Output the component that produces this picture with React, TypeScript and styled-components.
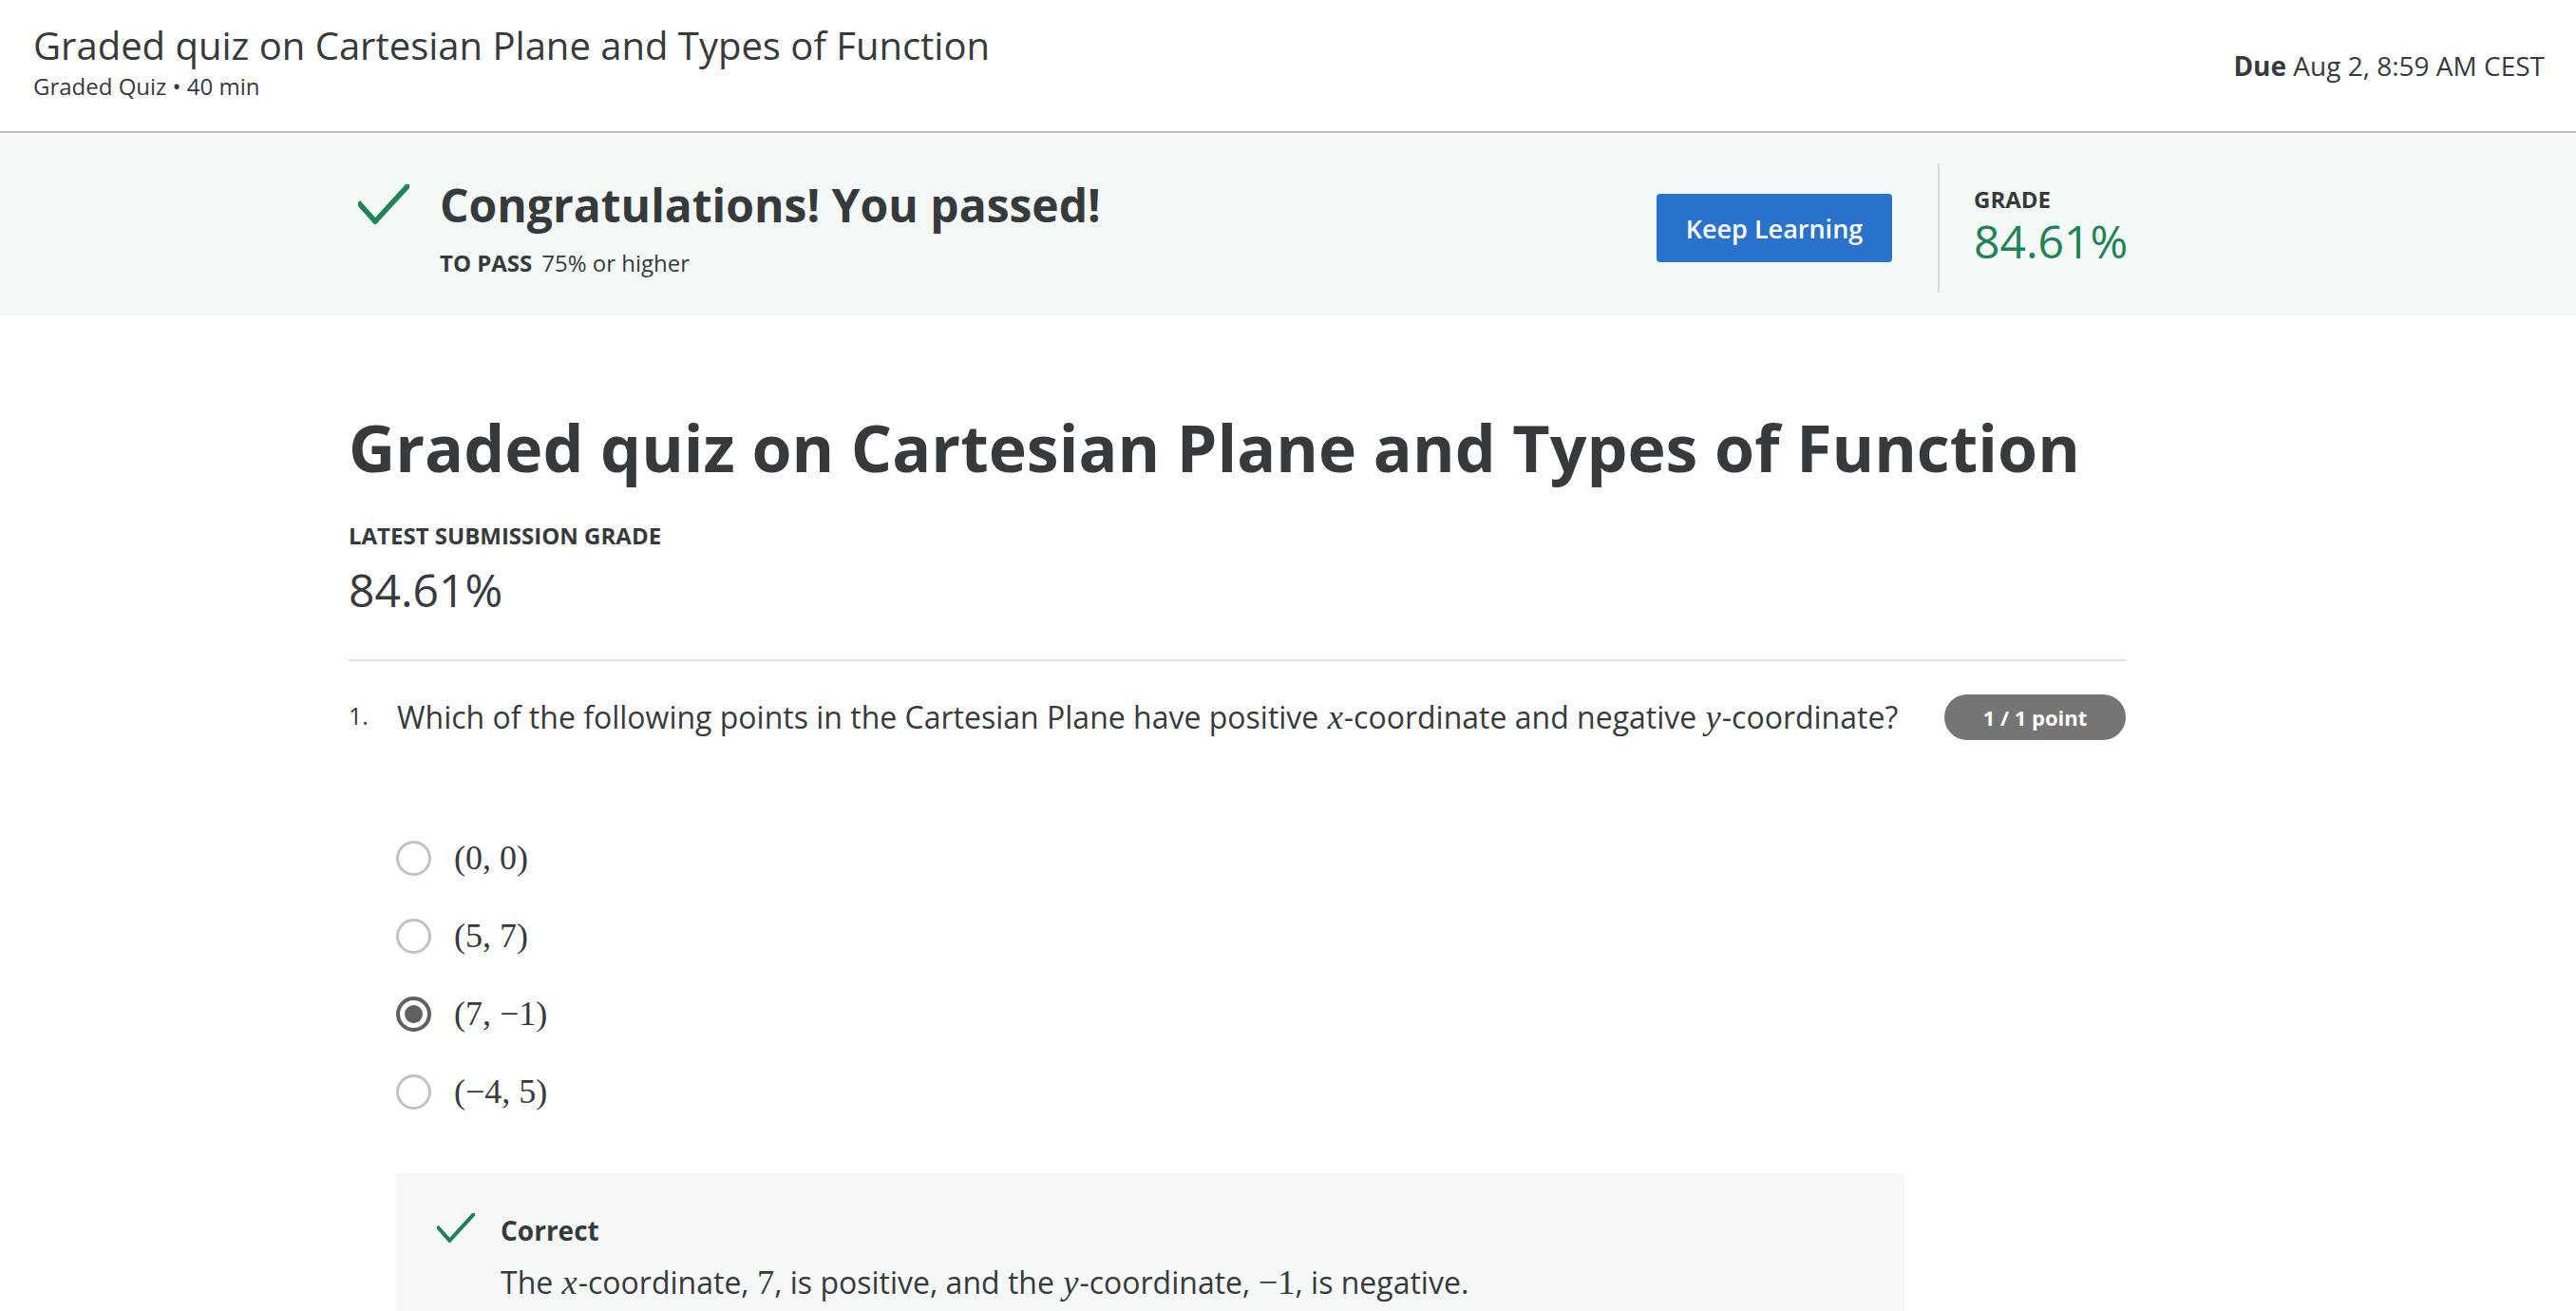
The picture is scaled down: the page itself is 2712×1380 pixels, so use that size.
import React from "react";
import styled, { createGlobalStyle } from "styled-components";

const GlobalStyle = createGlobalStyle`
  html, body {
    margin: 0;
    padding: 0;
    background: #ffffff;
  }
  body {
    font-family: "Open Sans", "Noto Sans", sans-serif;
    color: #373a3c;
  }
`;

const Page = styled.div`
  width: 2712px;
  min-height: 1380px;
  overflow: hidden;
`;

// top header
const Header = styled.header`
  height: 140px;
  box-sizing: border-box;
  padding: 24px 33px 0 35px;
  border-bottom: 2px solid #bdbdbd;
  display: flex;
  justify-content: space-between;
  align-items: flex-start;
`;

const HeaderTitle = styled.h1`
  margin: 0;
  font-size: 40px;
  line-height: 48px;
  font-weight: 400;
`;

const HeaderSub = styled.div`
  margin-top: 5px;
  font-size: 24px;
  line-height: 28px;
`;

const Due = styled.div`
  margin-top: 25px;
  font-size: 28px;
  line-height: 40px;
  b {
    font-weight: 700;
  }
`;

// success banner
const Banner = styled.section`
  background: #f4f8f7;
  height: 192px;
  display: flex;
  align-items: stretch;
`;

const BannerInner = styled.div`
  width: 1871px;
  margin-left: 367px;
  display: flex;
  align-items: center;
  justify-content: space-between;
`;

const PassGroup = styled.div`
  display: flex;
  align-items: flex-start;
  gap: 32px;
  margin-top: 4px;
`;

const CheckSlot = styled.div<{ $top: number; $left?: number }>`
  margin-top: ${({ $top }) => $top}px;
  margin-left: ${({ $left = 0 }) => $left}px;
  flex-shrink: 0;
`;

const PassTitle = styled.div`
  font-size: 48px;
  line-height: 60px;
  font-weight: 700;
`;

const PassRule = styled.div`
  margin-top: 17px;
  font-size: 24px;
  line-height: 28px;
  b {
    font-weight: 700;
    margin-right: 10px;
  }
`;

const GradeGroup = styled.div`
  display: flex;
  align-items: center;
  height: 136px;
  margin-top: 8px;
`;

const KeepButton = styled.button`
  width: 248px;
  height: 72px;
  border: none;
  border-radius: 4px;
  background: #2a73cc;
  color: #ffffff;
  font-family: inherit;
  font-size: 27px;
  font-weight: 600;
  cursor: pointer;
`;

const VDivider = styled.div`
  width: 2px;
  align-self: stretch;
  background: #dcdcdc;
  margin: 0 36px 0 48px;
`;

const GradeBox = styled.div`
  display: flex;
  flex-direction: column;
  width: 160px;
`;

const SmallCaps = styled.div`
  font-size: 24px;
  line-height: 28px;
  font-weight: 700;
  text-transform: uppercase;
`;

const GradeValue = styled.div<{ $green?: boolean; $gap?: number }>`
  margin-top: ${({ $gap = 0 }) => $gap}px;
  font-size: 48px;
  line-height: 60px;
  color: ${({ $green }) => ($green ? "#1f8354" : "#373a3c")};
`;

// main content
const Main = styled.main`
  width: 1871px;
  margin-left: 367px;
  padding-top: 96px;
`;

const QuizTitle = styled.h2`
  margin: 0 0 37px;
  font-size: 68px;
  line-height: 85px;
  font-weight: 700;
  white-space: nowrap;
`;

const Rule = styled.hr`
  margin: 43px 0 35px;
  border: none;
  border-top: 2px solid #e0e0e0;
`;

const QuestionRow = styled.div`
  display: flex;
  align-items: center;
  height: 48px;
`;

const QNum = styled.span`
  width: 51px;
  font-size: 25px;
  align-self: flex-start;
  margin-top: 5px;
`;

const QText = styled.span`
  flex: 1;
  font-size: 32px;
  line-height: 44px;
`;

const Mi = styled.span`
  font-family: "Liberation Serif", "DejaVu Serif", serif;
  font-style: italic;
  font-size: 1.14em;
  padding: 0 1px;
`;

const Mn = styled.span`
  font-family: "Liberation Serif", "DejaVu Serif", serif;
  font-size: 1.14em;
`;

const PointBadge = styled.span`
  width: 191px;
  height: 48px;
  border-radius: 24px;
  background: #757575;
  color: #ffffff;
  font-size: 22px;
  font-weight: 700;
  display: flex;
  align-items: center;
  justify-content: center;
`;

const Options = styled.div`
  margin: 83px 0 0 50px;
  display: flex;
  flex-direction: column;
`;

const OptionRow = styled.label`
  height: 82px;
  display: flex;
  align-items: center;
  gap: 24px;
`;

const Radio = styled.span<{ $checked?: boolean }>`
  width: 37px;
  height: 37px;
  box-sizing: border-box;
  border-radius: 50%;
  border: ${({ $checked }) => ($checked ? "4px solid #616161" : "3px solid #c2c2c2")};
  display: flex;
  align-items: center;
  justify-content: center;
  &::after {
    content: "";
    display: ${({ $checked }) => ($checked ? "block" : "none")};
    width: 19px;
    height: 19px;
    border-radius: 50%;
    background: #616161;
  }
`;

const MathText = styled.span`
  font-family: "Liberation Serif", "DejaVu Serif", serif;
  font-size: 36px;
  line-height: 44px;
`;

const Feedback = styled.div`
  margin: 45px 0 0 50px;
  width: 1588px;
  box-sizing: border-box;
  background: #f5f8f7;
  padding: 42px 43px 30px;
  display: flex;
  gap: 27px;
`;

const FeedbackTitle = styled.div`
  font-size: 28px;
  line-height: 36px;
  font-weight: 700;
`;

const FeedbackText = styled.div`
  margin-top: 15px;
  font-size: 32px;
  line-height: 44px;
`;

const Check = ({ w, h }: { w: number; h: number }) => (
  <svg width={w} height={h} viewBox="0 0 54 42" fill="none">
    <polyline
      points="2,21 18,39 52,2"
      stroke="#1f8354"
      strokeWidth="5.5"
      strokeLinecap="square"
      fill="none"
    />
  </svg>
);

const options = [
  { label: "(0, 0)", checked: false },
  { label: "(5, 7)", checked: false },
  { label: "(7, \u22121)", checked: true },
  { label: "(\u22124, 5)", checked: false },
];

export default function App() {
  return (
    <Page>
      <GlobalStyle />
      <Header>
        <div>
          <HeaderTitle>Graded quiz on Cartesian Plane and Types of Function</HeaderTitle>
          <HeaderSub>Graded Quiz • 40 min</HeaderSub>
        </div>
        <Due>
          <b>Due</b> Aug 2, 8:59 AM CEST
        </Due>
      </Header>

      <Banner>
        <BannerInner>
          <PassGroup>
            <CheckSlot $top={8} $left={10}>
              <Check w={54} h={42} />
            </CheckSlot>
            <div>
              <PassTitle>Congratulations! You passed!</PassTitle>
              <PassRule>
                <b>TO PASS</b>75% or higher
              </PassRule>
            </div>
          </PassGroup>
          <GradeGroup>
            <KeepButton>Keep Learning</KeepButton>
            <VDivider />
            <GradeBox>
              <SmallCaps>Grade</SmallCaps>
              <GradeValue $green>84.61%</GradeValue>
            </GradeBox>
          </GradeGroup>
        </BannerInner>
      </Banner>

      <Main>
        <QuizTitle>Graded quiz on Cartesian Plane and Types of Function</QuizTitle>
        <SmallCaps>Latest Submission Grade</SmallCaps>
        <GradeValue $gap={13}>84.61%</GradeValue>
        <Rule />

        <QuestionRow>
          <QNum>1.</QNum>
          <QText>
            Which of the following points in the Cartesian Plane have positive <Mi>x</Mi>-coordinate and
            negative <Mi>y</Mi>-coordinate?
          </QText>
          <PointBadge>1 / 1 point</PointBadge>
        </QuestionRow>

        <Options>
          {options.map((o) => (
            <OptionRow key={o.label}>
              <Radio $checked={o.checked} />
              <MathText>{o.label}</MathText>
            </OptionRow>
          ))}
        </Options>

        <Feedback>
          <CheckSlot $top={0}>
            <Check w={40} h={31} />
          </CheckSlot>
          <div>
            <FeedbackTitle>Correct</FeedbackTitle>
            <FeedbackText>
              The <Mi>x</Mi>-coordinate, <Mn>7</Mn>, is positive, and the <Mi>y</Mi>-coordinate, <Mn>{"\u22121"}</Mn>, is
              negative.
            </FeedbackText>
          </div>
        </Feedback>
      </Main>
    </Page>
  );
}
